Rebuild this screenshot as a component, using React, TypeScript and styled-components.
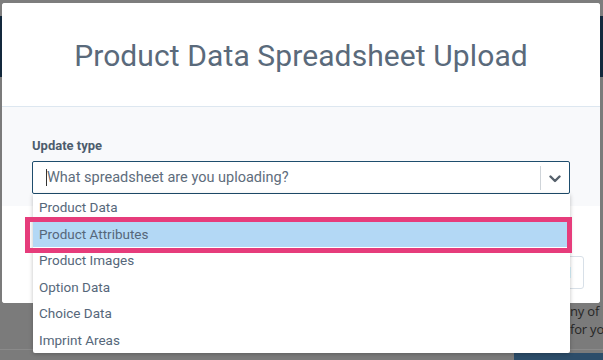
import styled, { createGlobalStyle } from 'styled-components'

const GlobalStyle = createGlobalStyle`
	html, body {
		margin: 0;
		padding: 0;
	}
	body {
		font-family: Roboto, 'Liberation Sans', sans-serif;
		overflow: hidden;
	}
`

const options = [
	'Product Data',
	'Product Attributes',
	'Product Images',
	'Option Data',
	'Choice Data',
	'Imprint Areas',
]

const App = () => {
	return (
		<Page>
			<GlobalStyle />
			<Backdrop>
				<TopStrip />
				<NavBand />
				<PageContent>
					<BgRow>
						<BgText>
							<span>ny of D</span>
							<span>for you</span>
						</BgText>
					</BgRow>
					<BgFooter>
						<BgButton />
					</BgFooter>
				</PageContent>
			</Backdrop>

			<Modal>
				<ModalHeader>
					<Title>Product Data Spreadsheet Upload</Title>
				</ModalHeader>
				<ModalBody>
					<Label>Update type</Label>
					<SelectBox>
						<Control>
							<Caret />
							<Placeholder>What spreadsheet are you uploading?</Placeholder>
						</Control>
						<Indicators>
							<Separator />
							<ChevronIcon viewBox="0 0 12 8">
								<path
									d="M1.5 1.5 L6 6 L10.5 1.5"
									fill="none"
									stroke="#56616c"
									strokeWidth="2.4"
									strokeLinecap="round"
									strokeLinejoin="round"
								/>
							</ChevronIcon>
						</Indicators>
					</SelectBox>
				</ModalBody>
				<ModalFooter>
					<CancelButton>Cancel</CancelButton>
				</ModalFooter>
			</Modal>

			<Menu>
				{options.map((o, i) => (
					<MenuItem key={o} $active={i === 1}>
						{o}
					</MenuItem>
				))}
			</Menu>
			<Highlight />
		</Page>
	)
}

export default App

const Page = styled.div`
	position: relative;
	width: 603px;
	height: 360px;
	overflow: hidden;
	background: #7b7b7b;
`

const Backdrop = styled.div`
	display: flex;
	flex-direction: column;
	height: 100%;
`

const TopStrip = styled.div`
	height: 16px;
	background: #7d7d7d;
`

const NavBand = styled.div`
	height: 61px;
	background: #13283c;
`

const PageContent = styled.div`
	flex: 1;
	display: flex;
	flex-direction: column;
	justify-content: flex-end;
	background: #7b7b7b;
`

const BgRow = styled.div`
	display: flex;
	justify-content: flex-end;
	margin-bottom: 11px;
`

const BgText = styled.p`
	width: 33px;
	margin: 0;
	display: flex;
	flex-direction: column;
	font-family: 'Open Sans', 'Liberation Sans', sans-serif;
	font-size: 13px;
	line-height: 18px;
	letter-spacing: -0.2px;
	color: #262626;
	white-space: nowrap;
`

const BgFooter = styled.div`
	display: flex;
	justify-content: flex-end;
	height: 10px;
	border-top: 1px solid #8a8a8a;
`

const BgButton = styled.div`
	width: 89px;
	margin-top: 3px;
	background: #2c4d6a;
`

const Modal = styled.div`
	position: absolute;
	left: 2px;
	top: 3px;
	width: 598px;
	height: 300px;
	display: flex;
	flex-direction: column;
	background: #ffffff;
	border-radius: 3px;
	overflow: hidden;
`

const ModalHeader = styled.div`
	height: 103px;
	display: flex;
	align-items: center;
	justify-content: center;
	border-bottom: 1px solid #dde7f0;
	background: #ffffff;
`

const Title = styled.h1`
	margin: 2px 0 0;
	font-size: 30px;
	font-weight: 400;
	color: #5a6a7b;
	letter-spacing: 0.1px;
`

const ModalBody = styled.div`
	background: #f8f9fb;
	padding: 31px 30px 12px 30px;
	display: flex;
	flex-direction: column;
	gap: 7px;
`

const Label = styled.label`
	font-size: 13px;
	line-height: 16px;
	font-weight: 700;
	color: #4d5d6d;
`

const SelectBox = styled.div`
	height: 31px;
	display: flex;
	align-items: center;
	background: #ffffff;
	border: 1px solid #1e4d6d;
	border-radius: 2px;
`

const Control = styled.div`
	flex: 1;
	display: flex;
	align-items: center;
	padding-left: 13px;
`

const Caret = styled.span`
	width: 1px;
	height: 17px;
	background: #333;
`

const Placeholder = styled.span`
	font-size: 14.5px;
	color: #5e6d7c;
`

const Indicators = styled.div`
	display: flex;
	align-items: center;
	height: 100%;
`

const Separator = styled.span`
	width: 1px;
	height: 24px;
	background: #cfd4d9;
`

const ChevronIcon = styled.svg`
	width: 12px;
	height: 8px;
	margin: 2px 8px 0 8px;
`

const ModalFooter = styled.div`
	flex: 1;
	display: flex;
	justify-content: flex-end;
	align-items: flex-end;
	padding: 0 16px 14px;
	background: #ffffff;
`

const CancelButton = styled.button`
	height: 33px;
	padding: 0 12px;
	background: #ffffff;
	border: 1px solid #d8e0e8;
	border-radius: 3px;
	font-family: Roboto, 'Liberation Sans', sans-serif;
	font-size: 14px;
	color: #5a6a7b;
`

const Menu = styled.ul`
	position: absolute;
	left: 33px;
	top: 194px;
	width: 537px;
	margin: 0;
	padding: 0;
	list-style: none;
	background: #ffffff;
	box-shadow: 0 1px 4px rgba(0, 0, 0, 0.25);
	border-radius: 0 0 2px 2px;
`

const MenuItem = styled.li<{ $active?: boolean }>`
	height: 26.5px;
	display: flex;
	align-items: center;
	padding-left: 6px;
	font-size: 13.5px;
	color: #56677a;
	background: ${(p) => (p.$active ? '#b3d8f5' : 'transparent')};
`

const Highlight = styled.div`
	position: absolute;
	left: 25px;
	top: 217px;
	width: 537px;
	height: 26px;
	border: 5px solid #e63c7b;
`
